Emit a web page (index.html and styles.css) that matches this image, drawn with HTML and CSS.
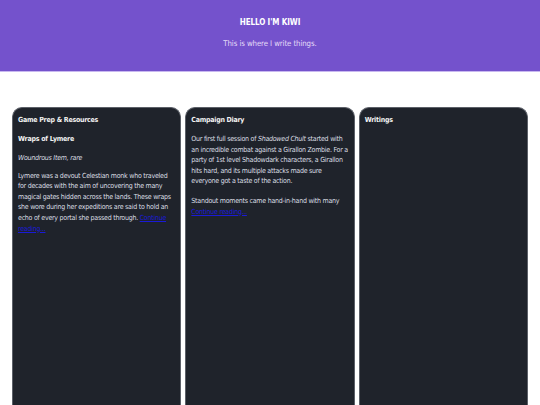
FILE: index.html
```html
<!DOCTYPE html>
<html>
<head>
<meta charset="utf-8">
<link rel="stylesheet" href="styles.css">
</head>
<body>
<header class="hero">
  <h1 class="hero-title">HELLO I'M KIWI</h1>
  <p class="hero-sub">This is where I write things.</p>
</header>
<main class="columns">
  <section class="card">
    <h2 class="card-title">Game Prep &amp; Resources</h2>
    <h3 class="item-title">Wraps of Lymere</h3>
    <p class="item-meta">Woundrous Item, rare</p>
    <p class="item-text">Lymere was a devout Celestian monk who traveled for decades with the aim of uncovering the many magical gates hidden across the lands. These wraps she wore during her expeditions are said to hold an echo of every portal she passed through. <a href="#" class="more">Continue reading...</a></p>
  </section>
  <section class="card">
    <h2 class="card-title">Campaign Diary</h2>
    <p class="item-text">Our first full session of <em>Shadowed Chult</em> started with an incredible combat against a Girallon Zombie. For a party of 1st level Shadowdark characters, a Girallon hits hard, and its multiple attacks made sure everyone got a taste of the action.</p>
    <p class="item-text">Standout moments came hand-in-hand with many <a href="#" class="more">Continue reading...</a></p>
  </section>
  <section class="card">
    <h2 class="card-title">Writings</h2>
  </section>
</main>
</body>
</html>
```
FILE: styles.css
```css
html, body {
  margin: 0;
  padding: 0;
  background: #ffffff;
  font-family: "DejaVu Sans Condensed", "DejaVu Sans", sans-serif;
}
.hero {
  background: #7452cc;
  border-bottom: 1px solid #c8b8f0;
  height: 72px;
  box-sizing: border-box;
  padding-top: 17px;
  text-align: center;
}
.hero-title {
  margin: 0;
  color: #ffffff;
  font-size: 8px;
  font-weight: bold;
  line-height: 12px;
  letter-spacing: -0.1px;
}
.hero-sub {
  margin: 9px 0 0;
  color: #e4dcf8;
  font-size: 7.8px;
  line-height: 12px;
  letter-spacing: -0.1px;
}
.columns {
  display: grid;
  grid-template-columns: 1fr 1fr 1fr;
  gap: 4px;
  padding: 35px 12px 0;
}
.card {
  background: #1f232b;
  border: 1px solid #5c6068;
  border-bottom: none;
  border-radius: 10px 10px 0 0;
  height: 300px;
  padding: 5px 5px;
  color: #dcdfe4;
  font-size: 7px;
  line-height: 10.6px;
  letter-spacing: -0.245px;
}
.card-title {
  margin: 2px 0 9px;
  font-size: 7px;
  font-weight: bold;
  color: #f2f2f2;
  line-height: 10px;
  letter-spacing: -0.25px;
}
.item-title {
  margin: 0 0 9px;
  font-size: 7px;
  font-weight: bold;
  color: #f2f2f2;
  line-height: 10px;
  letter-spacing: -0.25px;
}
.item-meta {
  margin: 0 0 7px;
  font-style: italic;
}
.item-text {
  margin: 0 0 9px;
}
.more {
  color: #1a1ad8;
}
```
